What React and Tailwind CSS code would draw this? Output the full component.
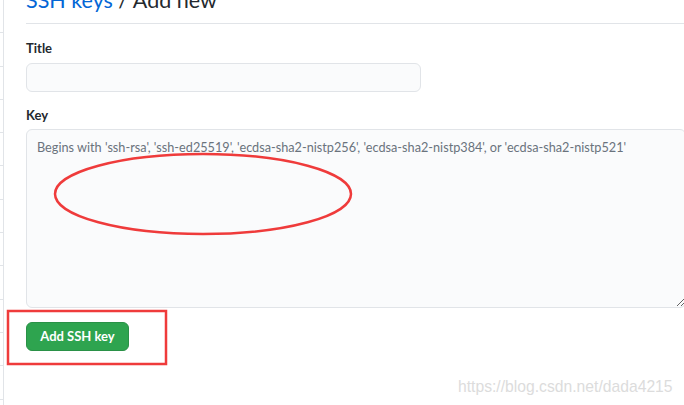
import React from "react";

export default function App() {
  const rows = Array.from({ length: 13 });
  return (
    <div
      className="relative w-[684px] h-[405px] overflow-hidden bg-white flex"
      style={{ fontFamily: 'Lato, "Open Sans", sans-serif' }}
    >
      {/* sidebar remnant */}
      <div className="w-[4px] shrink-0 border-r border-[#e1e4e8] flex flex-col">
        {rows.map((_, i) => (
          <div key={i} className="h-[33.3px] shrink-0 border-b border-[#e1e4e8]" />
        ))}
      </div>

      {/* main */}
      <div className="flex-1 pl-[22px] flex flex-col">
        <div className="mt-[-12px] h-[36px] pb-[11px] border-b border-[#e1e4e8]">
          <h2 className="text-[21.5px] leading-[24px] font-normal text-[#24292e] whitespace-nowrap">
            <span className="text-[#0366d6]">SSH keys</span> / Add new
          </h2>
        </div>

        <label className="mt-[14px] text-[13px] leading-[20px] font-bold text-[#24292e]">
          Title
        </label>
        <input
          className="mt-[5px] w-[395px] h-[29px] rounded-[6px] border border-[#e1e4e8] bg-[#fafbfc] outline-none"
        />

        <label className="mt-[13px] text-[13px] leading-[20px] font-bold text-[#24292e]">
          Key
        </label>
        <textarea
          className="mt-[4px] w-[660px] h-[179px] rounded-[6px] border border-[#e1e4e8] bg-[#fafbfc] outline-none pl-[10px] pt-[7px] text-[12.7px] leading-[20px] placeholder:text-[#6a737d] resize-y"
          style={{ fontFamily: 'Lato, "Open Sans", sans-serif' }}
          placeholder="Begins with 'ssh-rsa', 'ssh-ed25519', 'ecdsa-sha2-nistp256', 'ecdsa-sha2-nistp384', or 'ecdsa-sha2-nistp521'"
        />

        <div className="mt-[14px]">
          <button className="w-[103px] h-[29px] rounded-[6px] bg-[#2ea44f] border border-[#2a9147] text-white text-[13px] font-bold">
            Add SSH key
          </button>
        </div>
      </div>

      {/* annotations */}
      <svg className="absolute left-0 top-0 pointer-events-none" width="684" height="405">
        <ellipse cx="203" cy="194" rx="148" ry="40" fill="none" stroke="#ef3b3b" strokeWidth="2.5" />
        <rect x="8" y="311" width="158" height="53" fill="none" stroke="#ef3b3b" strokeWidth="2.5" />
      </svg>

      <div
        className="absolute left-[458px] top-[377px] text-[15.7px] leading-[20px] text-[#dcdcdc] whitespace-nowrap"
        style={{ fontFamily: '"Liberation Sans", Arial, sans-serif' }}
      >
        https://blog.csdn.net/dada4215
      </div>
    </div>
  );
}
